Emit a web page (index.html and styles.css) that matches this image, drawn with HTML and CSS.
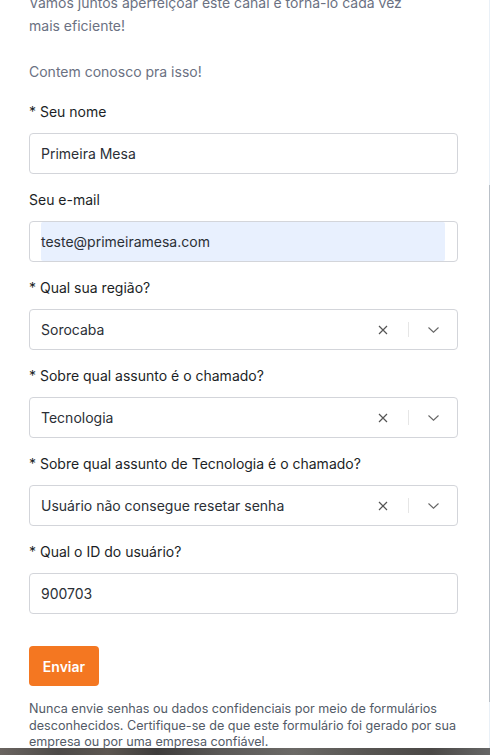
FILE: index.html
```html
<!DOCTYPE html>
<html lang="pt-BR">
<head>
<meta charset="utf-8">
<title>Formulário</title>
<link rel="stylesheet" href="styles.css">
</head>
<body>
<div class="page">
  <div class="panel">
    <div class="content">
      <p class="intro">Vamos juntos aperfeiçoar este canal e torná-lo cada vez<br>mais eficiente!<br><br>Contem conosco pra isso!</p>

      <form class="form">
        <div class="field">
          <label class="label">* Seu nome</label>
          <div class="box"><span class="value">Primeira Mesa</span></div>
        </div>
        <div class="field">
          <label class="label">Seu e-mail</label>
          <div class="box"><span class="value autofill">teste@primeiramesa.com</span></div>
        </div>
        <div class="field">
          <label class="label">* Qual sua região?</label>
          <div class="box select">
            <span class="value">Sorocaba</span>
            <span class="clear"><svg width="10" height="10" viewBox="0 0 10 10"><path d="M1 1L9 9M9 1L1 9" stroke="#555" stroke-width="1.2" fill="none"/></svg></span>
            <span class="sep"></span>
            <span class="chev"><svg width="11" height="6" viewBox="0 0 11 6"><path d="M0.5 0.5L5.5 5.2L10.5 0.5" stroke="#666" stroke-width="1.1" fill="none"/></svg></span>
          </div>
        </div>
        <div class="field">
          <label class="label">* Sobre qual assunto é o chamado?</label>
          <div class="box select">
            <span class="value">Tecnologia</span>
            <span class="clear"><svg width="10" height="10" viewBox="0 0 10 10"><path d="M1 1L9 9M9 1L1 9" stroke="#555" stroke-width="1.2" fill="none"/></svg></span>
            <span class="sep"></span>
            <span class="chev"><svg width="11" height="6" viewBox="0 0 11 6"><path d="M0.5 0.5L5.5 5.2L10.5 0.5" stroke="#666" stroke-width="1.1" fill="none"/></svg></span>
          </div>
        </div>
        <div class="field">
          <label class="label">* Sobre qual assunto de Tecnologia é o chamado?</label>
          <div class="box select">
            <span class="value">Usuário não consegue resetar senha</span>
            <span class="clear"><svg width="10" height="10" viewBox="0 0 10 10"><path d="M1 1L9 9M9 1L1 9" stroke="#555" stroke-width="1.2" fill="none"/></svg></span>
            <span class="sep"></span>
            <span class="chev"><svg width="11" height="6" viewBox="0 0 11 6"><path d="M0.5 0.5L5.5 5.2L10.5 0.5" stroke="#666" stroke-width="1.1" fill="none"/></svg></span>
          </div>
        </div>
        <div class="field">
          <label class="label">* Qual o ID do usuário?</label>
          <div class="box"><span class="value">900703</span></div>
        </div>
        <button type="button" class="submit">Enviar</button>
      </form>

      <p class="disclaimer">Nunca envie senhas ou dados confidenciais por meio de formulários desconhecidos. Certifique-se de que este formulário foi gerado por sua empresa ou por uma empresa confiável.</p>
    </div>
    <div class="track"><div class="thumb"></div></div>
  </div>
  <div class="backdrop"></div>
</div>
</body>
</html>
```
FILE: styles.css
```css
* { box-sizing: border-box; }
html, body { margin: 0; padding: 0; }
body {
  font-family: Inter, "Noto Sans", "Liberation Sans", sans-serif;
  background: #fff;
  width: 490px;
  height: 755px;
  overflow: hidden;
}
.page {
  display: flex;
  flex-direction: column;
  height: 755px;
}
.panel {
  height: 748px;
  display: flex;
  overflow: hidden;
  background: #fff;
}
.content {
  flex: 1;
  padding: 0 31px 0 29px;
  overflow: hidden;
}
.intro {
  margin: -9.3px 0 0;
  font-size: 14px;
  line-height: 23px;
  color: #6b7182;
}
.form {
  margin-top: 19.5px;
  display: flex;
  flex-direction: column;
}
.field {
  display: flex;
  flex-direction: column;
  margin-bottom: 16px;
}
.label {
  font-size: 14px;
  line-height: 20px;
  color: #1c1f26;
  margin-bottom: 11px;
}
.box {
  height: 41px;
  border: 1px solid #d3d5da;
  border-radius: 4px;
  display: flex;
  align-items: center;
  padding: 0 12px 0 11px;
}
.value {
  font-size: 14px;
  color: #2b2f36;
  flex: 1;
  display: flex;
  align-items: center;
  height: 100%;
  white-space: nowrap;
}
.autofill {
  background: #e8f0fe;
  height: 39px;
  border-radius: 2px;
}
.select { padding-right: 0; }
.clear {
  width: 50px;
  display: flex;
  justify-content: center;
  align-items: center;
}
.sep {
  width: 1px;
  height: 15px;
  background: #e6e6e6;
}
.chev {
  width: 48px;
  display: flex;
  justify-content: center;
  align-items: center;
}
.submit {
  align-self: flex-start;
  margin-top: 16px;
  width: 70px;
  height: 40px;
  border: none;
  border-radius: 4px;
  background: #f47721;
  color: #fff;
  font-family: inherit;
  font-size: 14px;
  font-weight: 600;
  padding: 0;
}
.disclaimer {
  margin: 15px 0 0;
  font-size: 12.6px;
  line-height: 16.5px;
  color: #535b67;
}
.track {
  width: 1px;
  background: #e9f0f7;
  display: flex;
  flex-direction: column;
  padding-top: 185px;
}
.thumb {
  height: 517px;
  background: #b9c0c8;
}
.backdrop {
  height: 7px;
  background: linear-gradient(90deg, #6a6460 0%, #4d4a48 12%, #5c5650 22%, #3e3c3b 32%, #5a5856 45%, #6b6966 60%, #575552 75%, #4a4846 88%, #666 100%);
}
```
